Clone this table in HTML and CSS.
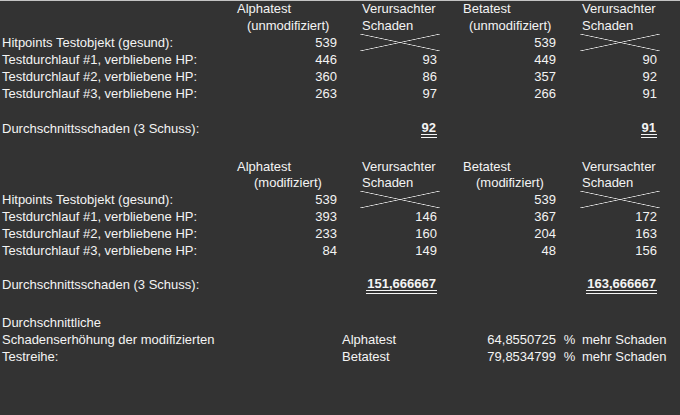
FILE: index.html
```html
<!DOCTYPE html>
<html lang="de">
<head>
<meta charset="utf-8">
<title>Testreihe</title>
<link rel="stylesheet" href="styles.css">
</head>
<body>
<div class="sheet">
<table class="grid">
  <colgroup>
    <col class="c-label"><col class="c-a"><col class="c-g1"><col class="c-b"><col class="c-g2"><col class="c-c"><col class="c-g3"><col class="c-d"><col class="c-rest">
  </colgroup>
  <tbody>
    <tr class="r0"><td></td><td class="h-first">Alphatest</td><td></td><td>Verursachter</td><td></td><td>Betatest</td><td></td><td>Verursachter</td><td></td></tr>
    <tr class="r1"><td></td><td class="h-unmod-a">(unmodifiziert)</td><td></td><td>Schaden</td><td></td><td class="h-unmod-c">(unmodifiziert)</td><td></td><td>Schaden</td><td></td></tr>
    <tr class="r2"><td>Hitpoints Testobjekt (gesund):</td><td class="num">539</td><td></td><td class="cross"></td><td></td><td class="num">539</td><td></td><td class="cross"></td><td></td></tr>
    <tr class="r3"><td>Testdurchlauf #1, verbliebene HP:</td><td class="num">446</td><td></td><td class="num">93</td><td></td><td class="num">449</td><td></td><td class="num">90</td><td></td></tr>
    <tr class="r4"><td>Testdurchlauf #2, verbliebene HP:</td><td class="num">360</td><td></td><td class="num">86</td><td></td><td class="num">357</td><td></td><td class="num">92</td><td></td></tr>
    <tr class="r5"><td>Testdurchlauf #3, verbliebene HP:</td><td class="num">263</td><td></td><td class="num">97</td><td></td><td class="num">266</td><td></td><td class="num">91</td><td></td></tr>
    <tr class="r6"><td></td><td></td><td></td><td></td><td></td><td></td><td></td><td></td><td></td></tr>
    <tr class="r7"><td>Durchschnittsschaden (3 Schuss):</td><td></td><td></td><td class="num"><span class="total">92</span></td><td></td><td></td><td></td><td class="num"><span class="total">91</span></td><td></td></tr>
    <tr class="r8"><td></td><td></td><td></td><td></td><td></td><td></td><td></td><td></td><td></td></tr>
    <tr class="r9"><td></td><td class="h-first">Alphatest</td><td></td><td>Verursachter</td><td></td><td>Betatest</td><td></td><td>Verursachter</td><td></td></tr>
    <tr class="r10"><td></td><td class="h-mod-a">(modifiziert)</td><td></td><td>Schaden</td><td></td><td class="h-mod-c">(modifiziert)</td><td></td><td>Schaden</td><td></td></tr>
    <tr class="r11"><td>Hitpoints Testobjekt (gesund):</td><td class="num">539</td><td></td><td class="cross"></td><td></td><td class="num">539</td><td></td><td class="cross"></td><td></td></tr>
    <tr class="r12"><td>Testdurchlauf #1, verbliebene HP:</td><td class="num">393</td><td></td><td class="num">146</td><td></td><td class="num">367</td><td></td><td class="num">172</td><td></td></tr>
    <tr class="r13"><td>Testdurchlauf #2, verbliebene HP:</td><td class="num">233</td><td></td><td class="num">160</td><td></td><td class="num">204</td><td></td><td class="num">163</td><td></td></tr>
    <tr class="r14"><td>Testdurchlauf #3, verbliebene HP:</td><td class="num">84</td><td></td><td class="num">149</td><td></td><td class="num">48</td><td></td><td class="num">156</td><td></td></tr>
    <tr class="r15"><td></td><td></td><td></td><td></td><td></td><td></td><td></td><td></td><td></td></tr>
    <tr class="r16"><td>Durchschnittsschaden (3 Schuss):</td><td></td><td></td><td class="num"><span class="total">151,666667</span></td><td></td><td></td><td></td><td class="num"><span class="total">163,666667</span></td><td></td></tr>
    <tr class="r17"><td></td><td></td><td></td><td></td><td></td><td></td><td></td><td></td><td></td></tr>
    <tr class="r18"><td>Durchschnittliche</td><td></td><td></td><td></td><td></td><td></td><td></td><td></td><td></td></tr>
    <tr class="r19"><td class="overflow" colspan="2">Schadenserhöhung der modifizierten</td><td class="overflow" colspan="2">Alphatest</td><td></td><td class="num">64,8550725</td><td class="pct">%</td><td>mehr Schaden</td><td></td></tr>
    <tr class="r20"><td>Testreihe:</td><td></td><td class="overflow" colspan="2">Betatest</td><td></td><td class="num">79,8534799</td><td class="pct">%</td><td>mehr Schaden</td><td></td></tr>
  </tbody>
</table>
</div>
</body>
</html>
```

FILE: styles.css
```css
html, body {
  margin: 0;
  padding: 0;
  background: #333333;
}

.sheet {
  width: 680px;
  height: 415px;
  box-sizing: border-box;
  border-top: 1px solid #c4c4c4;
  background: #333333;
  overflow: hidden;
}

.grid {
  border-collapse: collapse;
  table-layout: fixed;
  width: 680px;
  font-family: "Liberation Sans", Arial, sans-serif;
  font-size: 13px;
  color: #f4f4f4;
}

.c-label { width: 235px; }
.c-a { width: 105px; }
.c-g1 { width: 20px; }
.c-b { width: 80px; }
.c-g2 { width: 21px; }
.c-c { width: 98px; }
.c-g3 { width: 21px; }
.c-d { width: 80px; }
.c-rest { width: 20px; }

.grid td {
  padding: 0 2px;
  line-height: 16px;
  vertical-align: bottom;
  white-space: nowrap;
  overflow: visible;
}

.grid td.num {
  text-align: right;
  padding-right: 3px;
}

.grid td.pct {
  text-align: center;
  padding: 0;
}

.h-first { padding-left: 2px; }
.grid td.h-unmod-a { padding-left: 12px; }
.grid td.h-mod-a { padding-left: 19px; }
.grid td.h-unmod-c { padding-left: 8px; }
.grid td.h-mod-c { padding-left: 15px; }

.r0 td { height: 16px; }
.r1 td { height: 17px; }
.r2 td, .r3 td, .r4 td, .r5 td, .r6 td { height: 17px; }
.r7 td { height: 18px; }
.r8 td { height: 21px; }
.r9 td { height: 17px; }
.r10 td { height: 15px; }
.r11 td, .r12 td, .r13 td, .r14 td, .r15 td, .r16 td { height: 17px; }
.r17 td { height: 21px; }
.r18 td, .r19 td, .r20 td { height: 17px; }

.cross {
  background:
    linear-gradient(to top right, transparent calc(50% - 0.7px), #e6e6e6 50%, transparent calc(50% + 0.7px)),
    linear-gradient(to bottom right, transparent calc(50% - 0.7px), #e6e6e6 50%, transparent calc(50% + 0.7px));
}

.total {
  display: inline-block;
  font-weight: bold;
  line-height: 13px;
  border-bottom: 4px double #f4f4f4;
  padding: 0 1px;
  margin-bottom: -1px;
}
```
